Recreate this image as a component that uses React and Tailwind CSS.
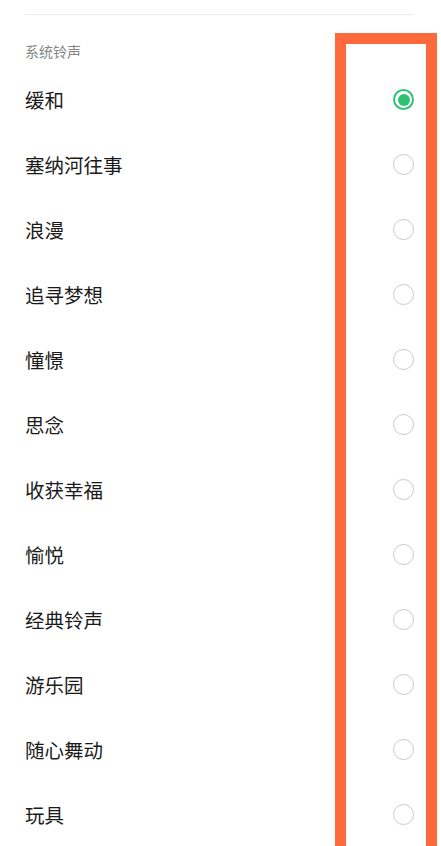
import React, { useState } from 'react';

const ringtones = [
  '缓和',
  '塞纳河往事',
  '浪漫',
  '追寻梦想',
  '憧憬',
  '思念',
  '收获幸福',
  '愉悦',
  '经典铃声',
  '游乐园',
  '随心舞动',
  '玩具',
];

const Radio = ({ checked }) => {
  if (checked) {
    return (
      <span className="flex items-center justify-center w-[21px] h-[21px] rounded-full border-2 border-[#2fc173]">
        <span className="w-[12px] h-[12px] rounded-full bg-[#2fc173]" />
      </span>
    );
  }
  return <span className="block w-[21px] h-[21px] rounded-full border-[1.5px] border-[#c9c9c9]" />;
};

const App = () => {
  const [selected, setSelected] = useState(0);

  return (
    <div
      className="relative w-[441px] h-[846px] overflow-hidden bg-white"
      style={{ fontFamily: '"Noto Sans CJK SC", "Noto Sans", sans-serif' }}
    >
      <div className="pt-[14px] px-[25px]">
        <div className="h-px bg-[#ececec] mr-[2px]" />
      </div>

      {/* section label */}
      <div className="px-[25px] pt-[29px] pb-[9px] text-[14px] leading-[14px] text-[#858585]">
        系统铃声
      </div>

      {/* list */}
      <div>
        {ringtones.map((name, i) => (
          <button
            key={name}
            onClick={() => setSelected(i)}
            className="flex items-center justify-between w-full h-[65px] pl-[25px] pr-[27px] text-left"
          >
            <span className="text-[19.5px] leading-none text-[#1a1a1a]">{name}</span>
            <Radio checked={selected === i} />
          </button>
        ))}
      </div>

      {/* annotation box */}
      <div className="pointer-events-none absolute left-[335px] top-[33px] w-[102px] h-[840px] border-[11px] border-[#ff6a3d]" />
    </div>
  );
};

export default App;
